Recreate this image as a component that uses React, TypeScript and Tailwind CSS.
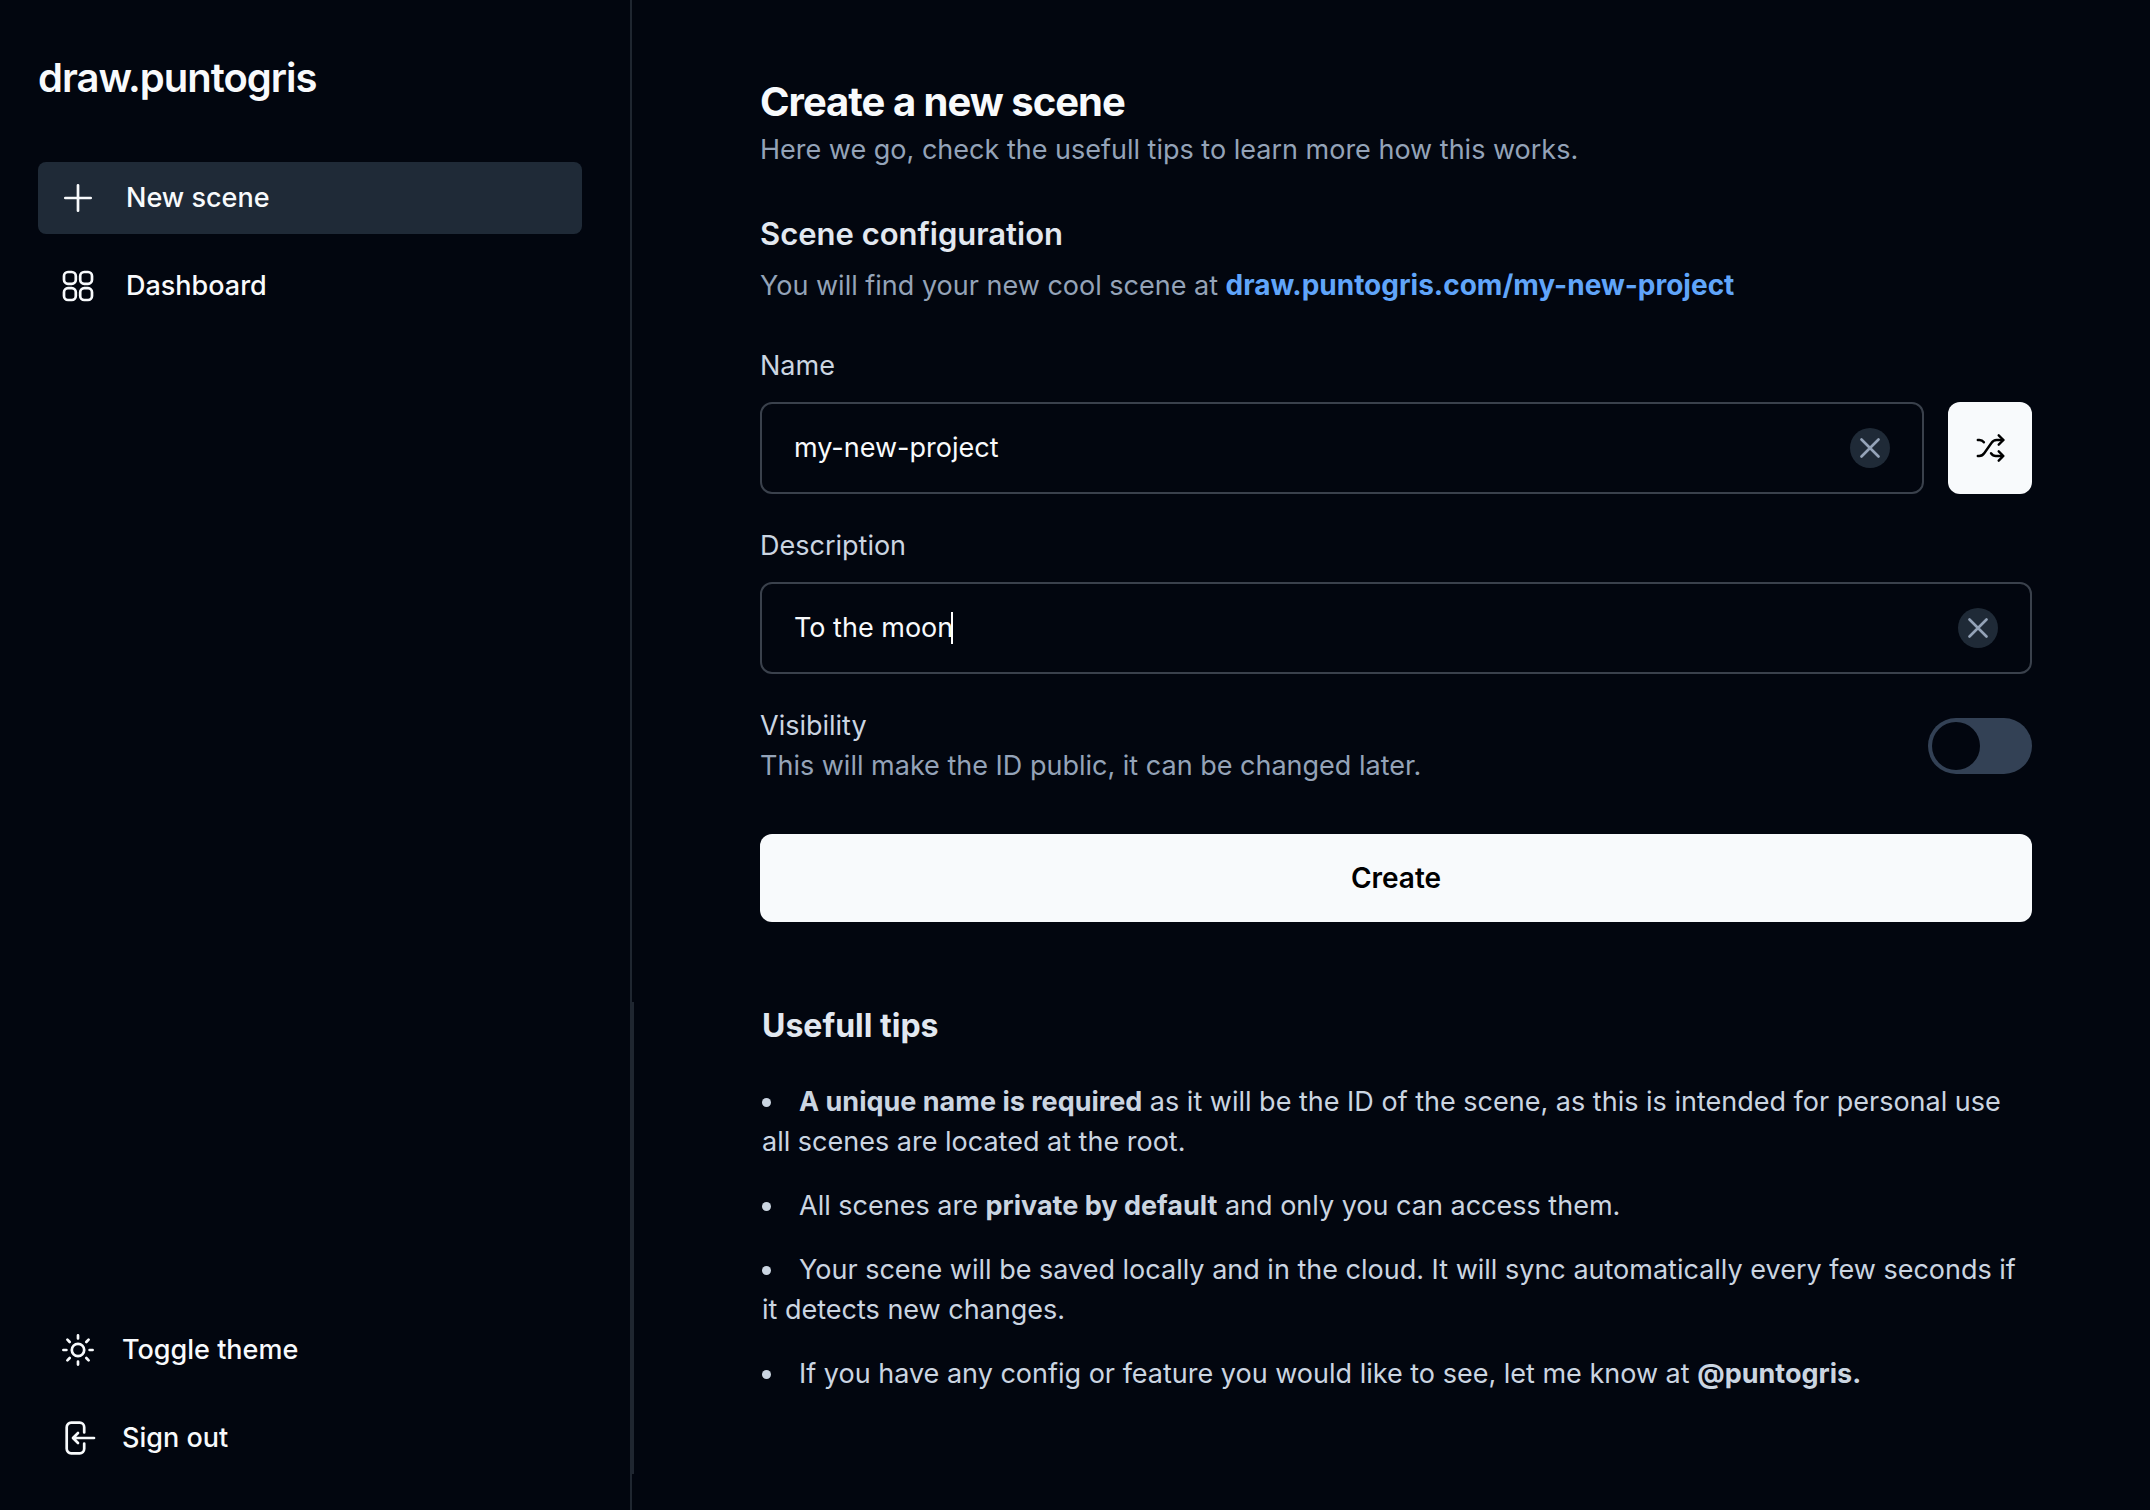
import { useState } from "react";
import type { ReactNode } from "react";

function Svg({ children, className, box = "0 0 32 32", w = 2.7 }: { children: ReactNode; className: string; box?: string; w?: number }) {
  return (
    <svg viewBox={box} fill="none" stroke="currentColor" strokeWidth={w} strokeLinecap="round" strokeLinejoin="round" aria-hidden="true" className={className}>
      {children}
    </svg>
  );
}

const PlusIcon = () => (
  <Svg className="size-8">
    <path d="M16 3.300v25.400M3.300 16h25.400" />
  </Svg>
);

const GridIcon = () => (
  <Svg className="size-8">
    <rect x="2" y="2" width="11.800" height="11.800" rx="4" />
    <rect x="18.200" y="2" width="11.800" height="11.800" rx="4" />
    <rect x="2" y="18.200" width="11.800" height="11.800" rx="4" />
    <rect x="18.200" y="18.200" width="11.800" height="11.800" rx="4" />
  </Svg>
);

const SunIcon = () => (
  <Svg className="size-8">
    <circle cx="16" cy="16" r="6.2" />
    <path d="M16 1.400v3M16 27.600v3M1.400 16h3M27.600 16h3M5.400 5.600l2.300 2.400M24.300 24l2.300 2.400M5.400 26.400l2.300-2.400M24.300 8l2.300-2.400" />
  </Svg>
);

const SignOutIcon = () => (
  <Svg className="size-8 overflow-visible">
    <path d="M22.200 10.500V5.200a4.500 4.500 0 0 0-4.500-4.500H9.200a4.500 4.500 0 0 0-4.500 4.500v21.600a4.500 4.500 0 0 0 4.500 4.500h8.500a4.500 4.500 0 0 0 4.500-4.500V21.500" />
    <path d="M32 16H11.500M16 11l-5 5 5 5" />
  </Svg>
);

const ShuffleIcon = () => (
  <Svg className="size-8" w={2.4}>
    <path d="M3.800 8h1.700c1.900 0 3.300.800 4.400 2.300M3.800 24h1.400c2.300 0 3.800-.900 5.200-3l7-10c1.400-2.100 2.900-3 5.200-3h6.600" />
    <path d="M24.700 3.300 29.400 8l-4.700 4.700M17 21.300c1.300 1.800 2.800 2.700 4.800 2.700h7.400M24.700 19.300l4.700 4.700-4.700 4.700" />
  </Svg>
);

const navRow = "flex h-18 w-full items-center rounded-lg pl-6 text-left text-[27px] font-medium leading-10 text-[#f8fafc]";

function ClearButton({ label, onClick }: { label: string; onClick: () => void }) {
  return (
    <button type="button" aria-label={label} onClick={onClick} className="flex size-10 shrink-0 items-center justify-center rounded-full bg-[#1f2a37] text-[#94a3b8]">
      <Svg className="size-5" box="0 0 20 20" w={2.6}>
        <path d="M1.500 1.500l17 17M18.500 1.500l-17 17" />
      </Svg>
    </button>
  );
}

function Field({ id, label, value, onChange, caret, children }: { id: string; label: string; value: string; onChange: (v: string) => void; caret?: boolean; children?: ReactNode }) {
  return (
    <div>
      <label htmlFor={id} className="block text-[27px] leading-10 text-[#cbd5e1]">{label}</label>
      <div className="mt-4 flex gap-6">
        <div className="flex h-23 min-w-0 flex-1 items-center rounded-xl border-2 border-[#3a414c] px-8">
          <div className="flex min-w-0 flex-1 items-center">
            <input
              id={id}
              value={value}
              onChange={(e) => onChange(e.target.value)}
              className={
                caret
                  ? "max-w-full bg-transparent text-[27px] leading-10 text-[#f8fafc] caret-transparent outline-none field-sizing-content"
                  : "w-full bg-transparent text-[27px] leading-10 text-[#f8fafc] outline-none"
              }
            />
            {caret && <span aria-hidden="true" className="-ml-0.5 h-8 w-0.5 shrink-0 bg-white" />}
          </div>
          <ClearButton label={"Clear " + label.toLowerCase()} onClick={() => onChange("")} />
        </div>
        {children}
      </div>
    </div>
  );
}

export default function App() {
  const [name, setName] = useState("my-new-project");
  const [description, setDescription] = useState("To the moon");
  const [isPublic, setPublic] = useState(false);

  return (
    <div className="flex min-h-screen bg-[#02060f] font-['Inter',sans-serif] text-[#f8fafc]">
      <aside className="flex w-158 shrink-0 border-r-2 border-[#1f2630]">
        <div className="flex flex-1 flex-col py-9 pl-[38px] pr-12">
          <h1 className="mt-[18px] text-[40px] font-semibold leading-12 tracking-tight">draw.puntogris</h1>
          <nav className="mt-15 flex flex-col gap-4">
            <a href="#new" aria-current="page" className={navRow + " bg-[#1f2a37]"}>
              <PlusIcon />
              <span className="ml-8">New scene</span>
            </a>
            <a href="#dashboard" className={navRow}>
              <GridIcon />
              <span className="ml-8">Dashboard</span>
            </a>
          </nav>
          <div className="mt-auto flex flex-col gap-4">
            <button type="button" className={navRow}>
              <SunIcon />
              <span className="ml-7">Toggle theme</span>
            </button>
            <button type="button" className={navRow}>
              <SignOutIcon />
              <span className="ml-7">Sign out</span>
            </button>
          </div>
        </div>
      </aside>
      <div aria-hidden="true" className="mb-9 mt-[1002px] w-0.5 shrink-0 bg-[#1f2630]" />

      <main className="min-w-0 flex-1 pb-20 pl-[126px] pr-[118px] pt-[78px]">
        <header>
          <h2 className="text-[40px] font-bold leading-12 tracking-tight">Create a new scene</h2>
          <p className="mt-1 text-[27px] leading-10 text-[#94a3b8]">Here we go, check the usefull tips to learn more how this works.</p>
        </header>

        <form onSubmit={(e) => e.preventDefault()}>
          <h3 className="mt-10 text-[31px] font-semibold leading-12 text-[#e2e8f0]">Scene configuration</h3>
          <p className="mt-2 text-[27px] leading-10 text-[#94a3b8]">
            You will find your new cool scene at{" "}
            <a href="#scene" className="text-[28px] font-bold leading-8 text-[#60a5fa]">draw.puntogris.com/{name}</a>
          </p>

          <div className="mt-10 flex flex-col gap-8">
            <Field id="name" label="Name" value={name} onChange={setName}>
              <button type="button" aria-label="Random name" onClick={() => setName("my-new-project")} className="flex w-21 shrink-0 items-center justify-center rounded-xl bg-[#f8fafc] text-black">
                <ShuffleIcon />
              </button>
            </Field>
            <Field id="description" label="Description" value={description} onChange={setDescription} caret />
            <div className="flex items-center justify-between">
              <label htmlFor="visibility" className="text-[27px] leading-10">
                <span className="block text-[#cbd5e1]">Visibility</span>
                <span className="block text-[#94a3b8]">This will make the ID public, it can be changed later.</span>
              </label>
              <span className="relative flex h-14 w-26 rounded-full bg-[#334155] p-1">
                <input
                  id="visibility"
                  type="checkbox"
                  role="switch"
                  checked={isPublic}
                  onChange={(e) => setPublic(e.target.checked)}
                  className="peer absolute inset-0 cursor-pointer appearance-none rounded-full"
                />
                <span className="pointer-events-none size-12 rounded-full bg-[#02060f] peer-checked:ml-auto" />
              </span>
            </div>
          </div>

          <button type="submit" className="mt-12 h-22 w-full rounded-xl bg-[#f8fafc] text-[28px] font-semibold leading-10 text-black">Create</button>
        </form>

        <section className="ml-0.5 mt-20">
          <h3 className="text-[32px] font-bold leading-12 text-[#e2e8f0]">Usefull tips</h3>
          <ul className="mt-8 flex list-inside list-disc flex-col gap-6 text-[27px] leading-10 text-[#cbd5e1]">
            <li><strong className="font-bold">A unique name is required</strong> as it will be the ID of the scene, as this is intended for personal use all scenes are located at the root.</li>
            <li>All scenes are <strong className="font-bold">private by default</strong> and only you can access them.</li>
            <li>Your scene will be saved locally and in the cloud. It will sync automatically every few seconds if it detects new changes.</li>
            <li>If you have any config or feature you would like to see, let me know at <strong className="font-bold">@puntogris.</strong></li>
          </ul>
        </section>
      </main>
    </div>
  );
}
